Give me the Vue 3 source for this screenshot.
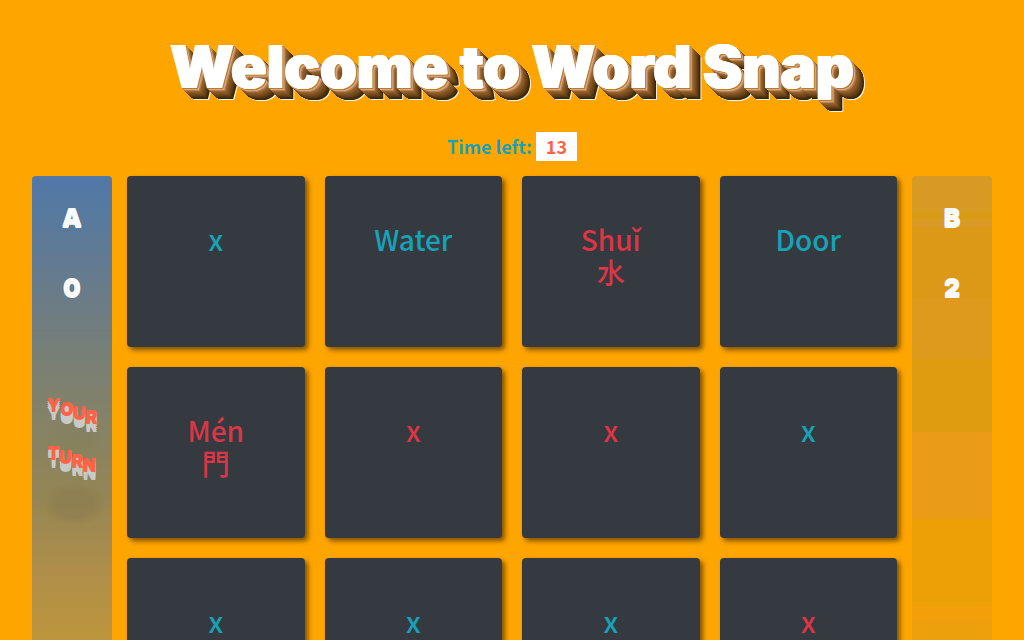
<script setup>
const timeLeft = 13
const players = [
  { name: 'A', score: 0, active: true },
  { name: 'B', score: 2, active: false },
]
const cards = [
  { word: 'x', lang: 'en' },
  { word: 'Water', lang: 'en' },
  { word: 'Shuǐ', sign: '水', lang: 'zh' },
  { word: 'Door', lang: 'en' },
  { word: 'Mén', sign: '門', lang: 'zh' },
  { word: 'x', lang: 'zh' },
  { word: 'x', lang: 'zh' },
  { word: 'x', lang: 'en' },
  { word: 'x', lang: 'en' },
  { word: 'x', lang: 'en' },
  { word: 'x', lang: 'en' },
  { word: 'x', lang: 'zh' },
]
const turnWords = ['YOUR', 'TURN']
</script>

<template>
  <div class="page">
    <h1 class="title">Welcome to Word Snap</h1>
    <p class="timer">Time left: <span class="seconds">{{ timeLeft }}</span></p>
    <main class="board">
      <aside class="player first">
        <span class="mark">{{ players[0].name }}</span>
        <span class="mark">{{ players[0].score }}</span>
        <div v-if="players[0].active" class="turn">
          <div v-for="word in turnWords" :key="word" class="turn-word">
            <span v-for="(letter, i) in word" :key="i" class="letter" :style="{ '--step': i }">{{ letter }}</span>
          </div>
        </div>
      </aside>
      <section class="cards">
        <button v-for="(card, i) in cards" :key="i" type="button" class="card" :class="card.lang">
          <span>{{ card.word }}</span>
          <span v-if="card.sign">{{ card.sign }}</span>
        </button>
      </section>
      <aside class="player second">
        <span class="mark">{{ players[1].name }}</span>
        <span class="mark">{{ players[1].score }}</span>
      </aside>
    </main>
  </div>
</template>

<style>
body {
  margin: 0;
  background: #ffa500;
}
</style>

<style scoped>
.page {
  padding: 32px;
  font-family: "Noto Sans CJK TC", "Noto Sans", sans-serif;
}
.title {
  margin: 0;
  text-align: center;
  white-space: nowrap;
  color: #fff;
  font-family: Inter, "Noto Sans", sans-serif;
  font-size: 59px;
  font-weight: 900;
  line-height: 70px;
  text-shadow: 1px 0 0 #fff, -1px 0 0 #fff;
  filter:
    drop-shadow(1px 1px 0 #b5801f)
    drop-shadow(1px 1px 0 #dca48c)
    drop-shadow(1px 1px 0 #b8805a)
    drop-shadow(1px 1px 0 #94642c)
    drop-shadow(1px 1px 0 #8a5c24)
    drop-shadow(1px 1px 0 #80521f)
    drop-shadow(1px 1px 0 #744a1b)
    drop-shadow(1px 1px 0 #674117)
    drop-shadow(1px 1px 0 #583713)
    drop-shadow(1px 1px 0 #482d10)
    drop-shadow(1px 1px 0 #35280c)
    drop-shadow(1px 1px 0 #fff3dc);
}
.timer {
  display: flex;
  justify-content: center;
  align-items: center;
  gap: 4px;
  margin: 30px 0 15px;
  color: #17a2b8;
  font-size: 18px;
  font-weight: 700;
  line-height: 29px;
}
.seconds {
  padding: 0 10px;
  background: #fff;
  color: #ff6347;
}
.board {
  display: grid;
  grid-template-columns: 80px 1fr 80px;
  gap: 15px;
}
.player {
  display: flex;
  flex-direction: column;
  align-items: center;
  padding-top: 24px;
  border-radius: 4px;
}
.first {
  background:
    radial-gradient(ellipse 34px 22px at 42px 266px, #7d7d5540 40%, transparent),
    radial-gradient(ellipse 32px 22px at 42px 328px, #86784c70 60%, transparent),
    linear-gradient(#5478a8 0, #5479a2 24px, #6b7c87 124px, #7a8073 190px, #948555 320px, #b08f4a 400px, #bd953b 464px, #d99b1e 570px);
}
.second {
  background: linear-gradient(
    #d79a25 36px, #d89b14 36px 43px, #d99a26 43px 51px, #db9917 51px 123px,
    #dd9a1c 123px 183px, #e09c10 183px 256px, #ea9b17 256px 343px,
    #eda006 343px 431px, #f39e0b 431px 445px, #eca10c 445px);
}
.mark {
  margin-bottom: 34px;
  color: #fafafa;
  font-family: Inter, sans-serif;
  font-size: 25px;
  font-weight: 900;
  line-height: 36px;
  text-shadow: 0 1px 0 #fafafa, 0 -1px 0 #fafafa;
}
.turn {
  margin-top: 53px;
  color: #ff6347;
  font-family: Inter, sans-serif;
  font-size: 17px;
  font-weight: 900;
  line-height: 24px;
  text-shadow:
    0 1px 0 #ff6347,
    0 3px 0 #c9cac5,
    0 5px 0 #c9cac5,
    0 7px 0 #c9cac5,
    0 9px 0 #c9cac5;
}
.turn-word {
  display: flex;
  justify-content: center;
  margin-bottom: 24px;
}
.letter {
  transform: translateY(calc(var(--step) * 4px));
}
.cards {
  display: grid;
  grid-template-columns: repeat(4, minmax(0, 1fr));
  gap: 20px;
}
.card {
  display: flex;
  flex-direction: column;
  align-items: center;
  min-height: 171px;
  padding: 47px 8px;
  border: 0;
  border-radius: 4px;
  background: #343a40;
  box-shadow: 3px 3px 5px rgba(0, 0, 0, 0.5);
  font-family: inherit;
  font-size: 28px;
  font-weight: 500;
  line-height: 33px;
  cursor: pointer;
}
.en {
  color: #17a2b8;
}
.zh {
  color: #dc3545;
}
</style>
